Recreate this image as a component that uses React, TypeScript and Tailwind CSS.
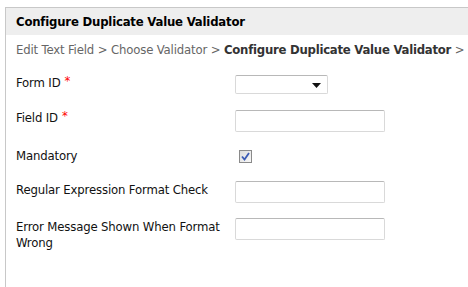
import React from "react";

const font = { fontFamily: "Tahoma, 'DejaVu Sans Condensed', 'DejaVu Sans', sans-serif" };

function Star() {
  return <span className="text-[#ff0000] text-[13px] ml-[4px] relative top-[-2px]">*</span>;
}

function TextInput() {
  return (
    <div className="w-[150px] h-[22px] bg-white border border-[#d9d9d9] border-t-[#b8b8b8] rounded-[2px]" />
  );
}

export default function App() {
  return (
    <div className="w-[468px] h-[287px] bg-white overflow-hidden pt-[7px] pl-[5px] tracking-[-0.15px]" style={font}>
      <div className="h-[280px] border-l border-t border-[#c8c8c8]">
        <div className="h-[27px] bg-[#eeeeee] pl-[10px] flex items-center text-[13px] font-bold text-black tracking-[-0.2px]">
          Configure Duplicate Value Validator
        </div>
        <div className="pl-[10px] pt-[7px] h-[30px] text-[13px] text-[#666666] whitespace-nowrap leading-[16px]">
          Edit Text Field &gt; Choose Validator &gt; <span className="font-bold text-[#333333] tracking-[-0.25px]">Configure Duplicate Value Validator</span> &gt;
        </div>
        <div className="pl-[10px] pt-[10px] flex flex-col text-[13px] text-[#111111] leading-[16px]">
          <div className="flex items-start">
            <div className="w-[219px]">Form ID<Star /></div>
            <div className="relative w-[93px] h-[19px] bg-white border border-[#d9d9d9] border-t-[#b8b8b8] rounded-[2px]">
              <svg className="absolute right-[6px] top-[7px]" width="9" height="5" viewBox="0 0 9 5">
                <path d="M0 0H9L4.5 5Z" fill="#111" />
              </svg>
            </div>
          </div>
          <div className="flex items-start mt-[16px]">
            <div className="w-[219px]">Field ID<Star /></div>
            <TextInput />
          </div>
          <div className="flex items-start mt-[16px]">
            <div className="w-[219px]">Mandatory</div>
            <div className="ml-[4px] mt-[2px] w-[13px] h-[13px] border border-[#8a8a8a] bg-gradient-to-br from-[#dcdcdc] to-[#f8f8f8] flex items-center justify-center">
              <svg width="9" height="9" viewBox="0 0 9 9">
                <path d="M1 4.5L3.5 7.5L8 1" stroke="#3b5bb5" strokeWidth="1.8" fill="none" />
              </svg>
            </div>
          </div>
          <div className="flex items-start mt-[17px]">
            <div className="w-[219px] pt-[1px]">Regular Expression Format Check</div>
            <TextInput />
          </div>
          <div className="flex items-start mt-[15px]">
            <div className="w-[219px] pt-[1px]">Error Message Shown When Format Wrong</div>
            <TextInput />
          </div>
        </div>
      </div>
    </div>
  );
}
